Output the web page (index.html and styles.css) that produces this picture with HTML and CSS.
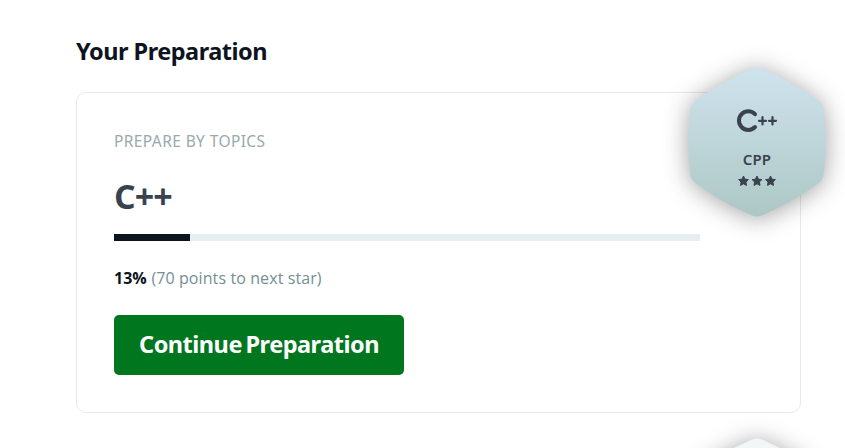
FILE: index.html
```html
<!DOCTYPE html>
<html lang="en">
<head>
<meta charset="utf-8">
<title>Your Preparation</title>
<link rel="stylesheet" href="styles.css">
</head>
<body>
<main class="page">
  <h1 class="heading">Your Preparation</h1>
  <section class="card">
    <div class="eyebrow">PREPARE BY TOPICS</div>
    <h2 class="topic">C++</h2>
    <div class="progress"><div class="progress-fill" style="width: 13%"></div></div>
    <p class="status"><strong>13%</strong> <span>(70 points to next star)</span></p>
    <button class="button">Continue Preparation</button>
    <div class="badge">
      <svg class="hexagon" viewBox="0 0 138 150">
        <defs><linearGradient id="silver" x1="0" y1="0" x2="0" y2="1"><stop offset="0" stop-color="#cfe3ed"/><stop offset="1" stop-color="#adc7c5"/></linearGradient></defs>
        <path fill="url(#silver)" d="M64 1.5Q69-.5 74 1.5Q105 15 131 34Q134.500 36.500 135.500 41Q140.500 75 135.500 109Q134.500 113 131 116Q105 135 74 148.500Q69 150.500 64 148.500Q33 135 7 116Q3.500 113 2.500 109Q-2.500 75 2.500 41Q3.500 36.500 7 34Q33 15 64 1.500Z"/>
        <g fill="none" stroke="#39424e" stroke-linecap="round">
          <path stroke-width="4" d="M67 47.2A9.3 9.3 0 1 0 67 60"/>
          <path stroke-width="2.2" d="M71 53.8H78M74.5 50.2V57.4M81 53.8H88M84.5 50.2V57.4"/>
        </g>
      </svg>
      <div class="badge-name">CPP</div>
      <svg class="stars" viewBox="0 0 38 12" fill="#39424e" stroke="#39424e" stroke-width="1" stroke-linejoin="round">
        <path id="star" d="M5.5 1L7 4.2L10.4 4.6L7.9 7L8.5 10.4L5.5 8.8L2.5 10.4L3.1 7L.6 4.6L4 4.2Z"/>
        <use href="#star" x="13.5"/><use href="#star" x="27"/>
      </svg>
    </div>
  </section>
  <div class="badge badge-next">
    <svg class="hexagon" viewBox="0 0 138 150"><path fill="#f2f6f7" d="M64 1.5Q69-.5 74 1.5Q105 15 131 34V116Q105 135 74 148.500Q69 150.500 64 148.500Q33 135 7 116V34Q33 15 64 1.500Z"/></svg>
  </div>
</main>
</body>
</html>
```
FILE: styles.css
```css
* { box-sizing: border-box; }
body { margin: 0; overflow: hidden; background: #fff; font-family: "Noto Sans", "Open Sans", sans-serif; }
.page { position: relative; height: 448px; padding: 35px 44px 0 76px; overflow: hidden; }
.heading { margin: 0 0 25px; font-family: "Noto Sans", sans-serif; font-size: 23.5px; line-height: 32px; font-weight: 700; color: #0e141e; letter-spacing: -.5px; }
.card { position: relative; width: 725px; height: 321px; padding: 36px 37px; border: 1px solid #e7e9eb; border-radius: 10px; }
.eyebrow { font-family: "Noto Sans", sans-serif; font-size: 15.5px; line-height: 24px; letter-spacing: .4px; color: #97aaac; }
.topic { margin: 23px 0 18px; font-family: "Open Sans", sans-serif; font-size: 34px; line-height: 40px; font-weight: 700; letter-spacing: -.9px; color: #39424e; }
.progress { width: 586px; height: 7px; background: #e7eef0; }
.progress-fill { height: 100%; background: #0e141e; }
.status { margin: 25px 0; font-family: "Open Sans", sans-serif; font-size: 16px; line-height: 24px; color: #738f93; }
.status strong { font-weight: 700; color: #0e141e; }
.status span { margin-left: .5px; letter-spacing: .1px; }
.button { display: block; width: 290px; height: 60px; padding: 0 0 2px; border: 0; border-radius: 5px; background: #00771f; color: #fff; font-family: "Noto Sans", sans-serif; font-size: 23.5px; font-weight: 700; letter-spacing: -.5px; word-spacing: -2px; white-space: nowrap; }
.badge { position: absolute; right: -26px; top: -26px; width: 138px; height: 150px; display: flex; flex-direction: column; align-items: center; color: #39424e; }
.hexagon { position: absolute; inset: 0; width: 138px; height: 150px; overflow: visible; filter: drop-shadow(0 2px 12px rgba(0, 0, 0, .36)); }
.badge-name { position: relative; margin-top: 82px; font-size: 15px; line-height: 20px; font-weight: 600; letter-spacing: .1px; }
.stars { position: relative; width: 38px; height: 12px; margin-top: 6px; }
.badge-next { top: 438px; right: 19px; }
```
